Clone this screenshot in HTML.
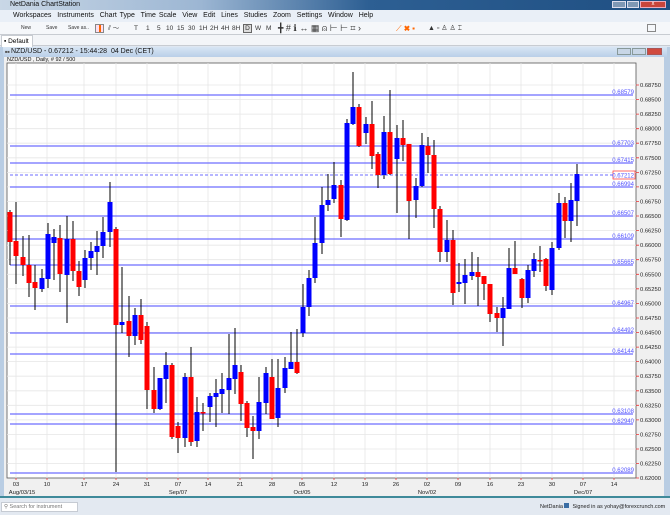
<!DOCTYPE html>
<html><head><meta charset="utf-8"><style>
*{margin:0;padding:0;box-sizing:border-box}
body{width:670px;height:515px;overflow:hidden;background:#dfe7f1;font-family:"Liberation Sans",sans-serif;position:relative}
.abs{position:absolute}
.tb span{position:absolute}
</style></head><body>
<div class="abs" style="left:0;top:0;width:670px;height:10px;background:linear-gradient(90deg,#c9d7e6 0%,#9cb6d3 30%,#2d5f93 55%,#1f4f82 100%)"></div>
<div class="abs" style="left:10px;top:0px;font-size:7px;color:#111;line-height:10px">NetDania ChartStation</div>
<div class="abs" style="left:612px;top:1px;width:14px;height:7px;background:#7f98b5;border:1px solid #dde"></div>
<div class="abs" style="left:627px;top:1px;width:12px;height:7px;background:#7f98b5;border:1px solid #dde"></div>
<div class="abs" style="left:640px;top:1px;width:26px;height:7px;background:#c9453b;border:1px solid #eab;color:#fff;font-size:6px;text-align:center;line-height:5px">x</div>
<div class="abs" style="left:0;top:10px;width:670px;height:12px;background:#e9eff7;font-size:7px;line-height:12px;color:#111;padding-left:13px;word-spacing:1px">Workspaces&nbsp; Instruments&nbsp; Chart Type&nbsp; Time Scale&nbsp; View&nbsp; Edit&nbsp; Lines&nbsp; Studies&nbsp; Zoom&nbsp; Settings&nbsp; Window&nbsp; Help</div>
<div class="abs tb" style="left:0;top:22px;width:670px;height:13px;background:#f5f7fa;border-bottom:1px solid #c8ccd2;font-size:6.5px;line-height:13px;color:#333">
<span style="left:21px;font-size:5px">New</span><span style="left:46px;font-size:5px">Save</span><span style="left:68px;font-size:5px">Save as..</span>
<span style="left:95px;top:2px;width:9px;height:9px;border:1px solid #888;background:#fde"></span><span style="left:99px;top:3px;width:2px;height:7px;background:#f60"></span>
<span style="left:108px">⫽ 〜</span>
<span style="left:134px">T</span><span style="left:146px">1</span><span style="left:157px">5</span><span style="left:166px">10</span><span style="left:177px">15</span><span style="left:188px">30</span><span style="left:199px">1H</span><span style="left:210px">2H</span><span style="left:221px">4H</span><span style="left:232px">8H</span>
<span style="left:243px;top:2px;width:9px;height:9px;border:1px solid #666;background:#ddd;text-align:center;line-height:8px">D</span>
<span style="left:255px">W</span><span style="left:266px">M</span>
<span style="left:278px;font-size:9px">╋ # ℹ ↔ ▦ ⍝ ⊢ ⊢ ⌗ ›</span>
<span style="left:396px;color:#f60;font-size:8px">⟋ ✖ ▪</span>
<span style="left:428px;font-size:7px">▲ ▫ ♙ ♙ ⌶</span>
<span style="left:647px;top:2px;width:9px;height:8px;border:1px solid #888"></span>
</div>
<div class="abs" style="left:0;top:35px;width:670px;height:11px;background:#f3f5f8;border-bottom:1px solid #c8ccd2"></div>
<div class="abs" style="left:1px;top:35px;width:32px;height:12px;background:#fff;border:1px solid #c8ccd2;border-bottom:none;font-size:6.5px;line-height:11px;padding-left:2px">▪ Default</div>
<div class="abs" style="left:0;top:47px;width:670px;height:451px;background:#b9cde3"></div>
<div class="abs" style="left:3px;top:47px;width:664px;height:10px;background:linear-gradient(#d7e5f4,#b9cfe8);font-size:7px;line-height:10px;padding-left:2px;color:#111"><span style="font-size:4px;color:#555">■■ </span>NZD/USD - 0.67212 - 15:44:28&nbsp; 04 Dec (CET)</div>
<div class="abs" style="left:617px;top:48px;width:14px;height:7px;background:#c8d6e6;border:1px solid #899"></div>
<div class="abs" style="left:632px;top:48px;width:14px;height:7px;background:#c8d6e6;border:1px solid #899"></div>
<div class="abs" style="left:647px;top:48px;width:15px;height:7px;background:#d04a3f;border:1px solid #a55"></div>
<div class="abs" style="left:4px;top:57px;width:660px;height:440px;background:#f0f0f0"></div>
<div class="abs" style="left:7px;top:57px;font-size:5.5px;line-height:6px;color:#111">NZD/USD , Daily, # 92 / 500</div>
<div class="abs" style="left:0;top:496px;width:670px;height:2px;background:#3f8a9a"></div>
<div class="abs" style="left:0;top:498px;width:670px;height:17px;background:#e3e9f1"></div>
<div class="abs" style="left:1px;top:502px;width:77px;height:10px;background:#fff;border:1px solid #c6cbd3;font-size:5.5px;line-height:9px;color:#777;padding-left:2px">⚲ Search for instrument</div>
<div class="abs" style="left:540px;top:503px;font-size:5.5px;color:#222">NetDania <span style="display:inline-block;width:5px;height:5px;background:#3a6ea5"></span>&nbsp; Signed in as yohay@forexcrunch.com</div>
<svg class="abs" style="left:0;top:0" width="670" height="515" xmlns="http://www.w3.org/2000/svg" font-family="Liberation Sans, sans-serif">
<rect x="7" y="63" width="629" height="415" fill="#fff" stroke="#555" stroke-width="0.8"/>
<g stroke="#e6e6e6" stroke-width="0.8">
<path d="M16 63V478M47 63V478M84 63V478M116 63V478M147 63V478M178 63V478M208 63V478M240 63V478M272 63V478M302 63V478M334 63V478M365 63V478M396 63V478M427 63V478M458 63V478M490 63V478M521 63V478M552 63V478M583 63V478M614 63V478"/>
<path d="M7 85H636M7 99.6H636M7 114.1H636M7 128.7H636M7 143.2H636M7 157.8H636M7 172.4H636M7 186.9H636M7 201.5H636M7 216H636M7 230.6H636M7 245.2H636M7 259.7H636M7 274.3H636M7 288.8H636M7 303.4H636M7 318H636M7 332.5H636M7 347.1H636M7 361.6H636M7 376.2H636M7 390.8H636M7 405.3H636M7 419.9H636M7 434.4H636M7 449H636M7 463.6H636"/>
</g>
<g stroke="#6d6dff" stroke-width="1.2">
<path d="M10 95H633M10 146H633M10 163H633M10 187H633M10 216H633M10 239H633M10 265H633M10 306H633M10 333H633M10 354H633M10 414H633M10 424H633M10 473H633"/>
</g>
<path d="M10 175H633" stroke="#6d6dff" stroke-width="1" stroke-dasharray="3,2"/>
<g font-size="6" fill="#5555ff" text-anchor="end">
<text x="634" y="94">0.68579</text><text x="634" y="145">0.67703</text><text x="634" y="162">0.67415</text><text x="634" y="186">0.66994</text><text x="634" y="215">0.66507</text><text x="634" y="238">0.66109</text><text x="634" y="264">0.65665</text><text x="634" y="305">0.64967</text><text x="634" y="332">0.64492</text><text x="634" y="353">0.64144</text><text x="634" y="413">0.63108</text><text x="634" y="423">0.62940</text><text x="634" y="472">0.62089</text>
</g>
<rect x="613" y="171" width="22" height="8" fill="#fff" stroke="#f44" stroke-width="0.8"/>
<text x="634" y="177.5" font-size="6" fill="#5555ff" text-anchor="end">0.67212</text>
<g stroke="#000" stroke-width="1">
<path d="M10 210V265M16 202V284M23 236V276M29 235V297M35 265V310M42 269V292M48 223V288M54 229V280M60 225V292M67 216V323M73 221V281M79 261V296M85 250V288M91 242V270M97 231V275M103 217V258M110 182V247M116 227V472M122 267V333M129 296V357M135 308V345M141 299V344M147 322V409M154 367V413M160 378V410M166 352V403M172 363V439M178 422V453M185 373V447M191 347V446M197 397V447M203 403V431M210 393V422M216 379V427M222 373V413M229 334V414M235 328V394M241 365V421M247 401V437M253 416V459M259 377V439M266 367V414M272 359V419M278 359V427M285 357V393M291 332V369M297 329V374M303 284V337M309 270V316M315 217V283M322 187V254M328 174V211M334 162V203M341 180V237M347 119V221M353 72V125M359 104V147M366 117V144M372 101V169M378 152V188M384 116V179M390 90V175M397 125V213M403 120V161M409 144V239M416 178V218M422 133V187M428 137V173M434 140V228M440 206V262M447 220V262M453 230V305M459 263V292M465 259V304M472 252V280M478 257V306M484 277V300M490 284V322M497 307V332M503 297V346M509 248V309M515 241V274M522 278V308M528 265V303M534 253V277M540 246V272M546 258V291M552 242V295M559 193V250M565 197V238M571 183V242M577 164V226"/>
</g>
<g fill="#ff0000">
<rect x="7.5" y="212" width="5" height="30"/><rect x="13.5" y="241" width="5" height="15"/><rect x="20.5" y="257" width="5" height="8"/><rect x="26.5" y="265" width="5" height="18"/><rect x="32.5" y="282" width="5" height="6"/><rect x="57.5" y="238" width="5" height="36"/><rect x="70.5" y="239" width="5" height="32"/><rect x="76.5" y="271" width="5" height="16"/><rect x="113.5" y="229" width="5" height="96"/><rect x="126.5" y="321" width="5" height="15"/><rect x="138.5" y="315" width="5" height="25"/><rect x="144.5" y="326" width="5" height="64"/><rect x="151.5" y="390" width="5" height="19"/><rect x="169.5" y="365" width="5" height="72"/><rect x="175.5" y="426" width="5" height="12"/><rect x="188.5" y="377" width="5" height="65"/><rect x="200.5" y="412" width="5" height="1.5"/><rect x="238.5" y="372" width="5" height="32"/><rect x="244.5" y="403" width="5" height="25"/><rect x="250.5" y="427" width="5" height="4"/><rect x="269.5" y="377" width="5" height="42"/><rect x="294.5" y="362" width="5" height="11"/><rect x="338.5" y="185" width="5" height="34"/><rect x="356.5" y="107" width="5" height="39"/><rect x="369.5" y="124" width="5" height="32"/><rect x="375.5" y="154" width="5" height="21"/><rect x="387.5" y="132" width="5" height="42"/><rect x="400.5" y="138" width="5" height="7"/><rect x="406.5" y="144" width="5" height="57"/><rect x="425.5" y="146" width="5" height="9"/><rect x="431.5" y="155" width="5" height="54"/><rect x="437.5" y="209" width="5" height="43"/><rect x="450.5" y="240" width="5" height="53"/><rect x="475.5" y="272" width="5" height="5"/><rect x="481.5" y="276" width="5" height="8"/><rect x="487.5" y="284" width="5" height="30"/><rect x="494.5" y="313" width="5" height="5"/><rect x="512.5" y="268" width="5" height="6"/><rect x="519.5" y="279" width="5" height="19"/><rect x="537.5" y="260" width="5" height="1.5"/><rect x="543.5" y="259" width="5" height="27"/><rect x="562.5" y="203" width="5" height="18"/>
</g>
<g fill="#0000ff">
<rect x="39.5" y="278" width="5" height="11"/><rect x="45.5" y="234" width="5" height="45"/><rect x="51.5" y="237" width="5" height="6"/><rect x="64.5" y="239" width="5" height="36"/><rect x="82.5" y="258" width="5" height="22"/><rect x="88.5" y="251" width="5" height="7"/><rect x="94.5" y="246" width="5" height="6"/><rect x="100.5" y="232" width="5" height="14"/><rect x="107.5" y="202" width="5" height="30"/><rect x="119.5" y="322" width="5" height="3"/><rect x="132.5" y="315" width="5" height="21"/><rect x="157.5" y="378" width="5" height="31"/><rect x="163.5" y="365" width="5" height="14"/><rect x="182.5" y="377" width="5" height="61"/><rect x="194.5" y="412" width="5" height="29"/><rect x="207.5" y="396" width="5" height="11"/><rect x="213.5" y="393" width="5" height="4"/><rect x="219.5" y="389" width="5" height="5"/><rect x="226.5" y="378" width="5" height="12"/><rect x="232.5" y="365" width="5" height="14"/><rect x="256.5" y="402" width="5" height="29"/><rect x="263.5" y="373" width="5" height="30"/><rect x="275.5" y="388" width="5" height="30"/><rect x="282.5" y="368" width="5" height="20"/><rect x="288.5" y="362" width="5" height="7"/><rect x="300.5" y="307" width="5" height="26"/><rect x="306.5" y="278" width="5" height="29"/><rect x="312.5" y="243" width="5" height="35"/><rect x="319.5" y="205" width="5" height="38"/><rect x="325.5" y="200" width="5" height="5"/><rect x="331.5" y="185" width="5" height="14"/><rect x="344.5" y="123" width="5" height="97"/><rect x="350.5" y="107" width="5" height="17"/><rect x="363.5" y="124" width="5" height="9"/><rect x="381.5" y="132" width="5" height="43"/><rect x="394.5" y="138" width="5" height="21"/><rect x="413.5" y="186" width="5" height="14"/><rect x="419.5" y="145" width="5" height="41"/><rect x="444.5" y="240" width="5" height="12"/><rect x="456.5" y="282" width="5" height="2"/><rect x="462.5" y="275" width="5" height="8"/><rect x="469.5" y="272" width="5" height="4"/><rect x="500.5" y="308" width="5" height="10"/><rect x="506.5" y="268" width="5" height="41"/><rect x="525.5" y="270" width="5" height="28"/><rect x="531.5" y="259" width="5" height="12"/><rect x="549.5" y="248" width="5" height="42"/><rect x="556.5" y="203" width="5" height="45"/><rect x="568.5" y="200" width="5" height="21"/><rect x="574.5" y="174" width="5" height="27"/>
</g>
<g stroke="#e33" stroke-width="0.8">
<path d="M636 85h3M636 99.6h3M636 114.1h3M636 128.7h3M636 143.2h3M636 157.8h3M636 172.4h3M636 186.9h3M636 201.5h3M636 216h3M636 230.6h3M636 245.2h3M636 259.7h3M636 274.3h3M636 288.8h3M636 303.4h3M636 318h3M636 332.5h3M636 347.1h3M636 361.6h3M636 376.2h3M636 390.8h3M636 405.3h3M636 419.9h3M636 434.4h3M636 449h3M636 463.6h3M636 478h3"/>
<path d="M16 478v2M47 478v2M84 478v2M116 478v2M147 478v2M178 478v2M208 478v2M240 478v2M272 478v2M302 478v2M334 478v2M365 478v2M396 478v2M427 478v2M458 478v2M490 478v2M521 478v2M552 478v2M583 478v2M614 478v2"/>
</g>
<g font-size="5.8" fill="#222">
<text x="640" y="87">0.68750</text><text x="640" y="101.6">0.68500</text><text x="640" y="116.1">0.68250</text><text x="640" y="130.7">0.68000</text><text x="640" y="145.2">0.67750</text><text x="640" y="159.8">0.67500</text><text x="640" y="174.4">0.67250</text><text x="640" y="188.9">0.67000</text><text x="640" y="203.5">0.66750</text><text x="640" y="218">0.66500</text><text x="640" y="232.6">0.66250</text><text x="640" y="247.2">0.66000</text><text x="640" y="261.7">0.65750</text><text x="640" y="276.3">0.65500</text><text x="640" y="290.8">0.65250</text><text x="640" y="305.4">0.65000</text><text x="640" y="320">0.64750</text><text x="640" y="334.5">0.64500</text><text x="640" y="349.1">0.64250</text><text x="640" y="363.6">0.64000</text><text x="640" y="378.2">0.63750</text><text x="640" y="392.8">0.63500</text><text x="640" y="407.3">0.63250</text><text x="640" y="421.9">0.63000</text><text x="640" y="436.4">0.62750</text><text x="640" y="451">0.62500</text><text x="640" y="465.6">0.62250</text><text x="640" y="480">0.62000</text>
</g>
<g font-size="5.8" fill="#222" text-anchor="middle">
<text x="16" y="486">03</text><text x="47" y="486">10</text><text x="84" y="486">17</text><text x="116" y="486">24</text><text x="147" y="486">31</text><text x="178" y="486">07</text><text x="208" y="486">14</text><text x="240" y="486">21</text><text x="272" y="486">28</text><text x="302" y="486">05</text><text x="334" y="486">12</text><text x="365" y="486">19</text><text x="396" y="486">26</text><text x="427" y="486">02</text><text x="458" y="486">09</text><text x="490" y="486">16</text><text x="521" y="486">23</text><text x="552" y="486">30</text><text x="583" y="486">07</text><text x="614" y="486">14</text>
<text x="22" y="494">Aug/03/15</text><text x="178" y="494">Sep/07</text><text x="302" y="494">Oct/05</text><text x="427" y="494">Nov/02</text><text x="583" y="494">Dec/07</text>
</g>
</svg>
</body></html>
